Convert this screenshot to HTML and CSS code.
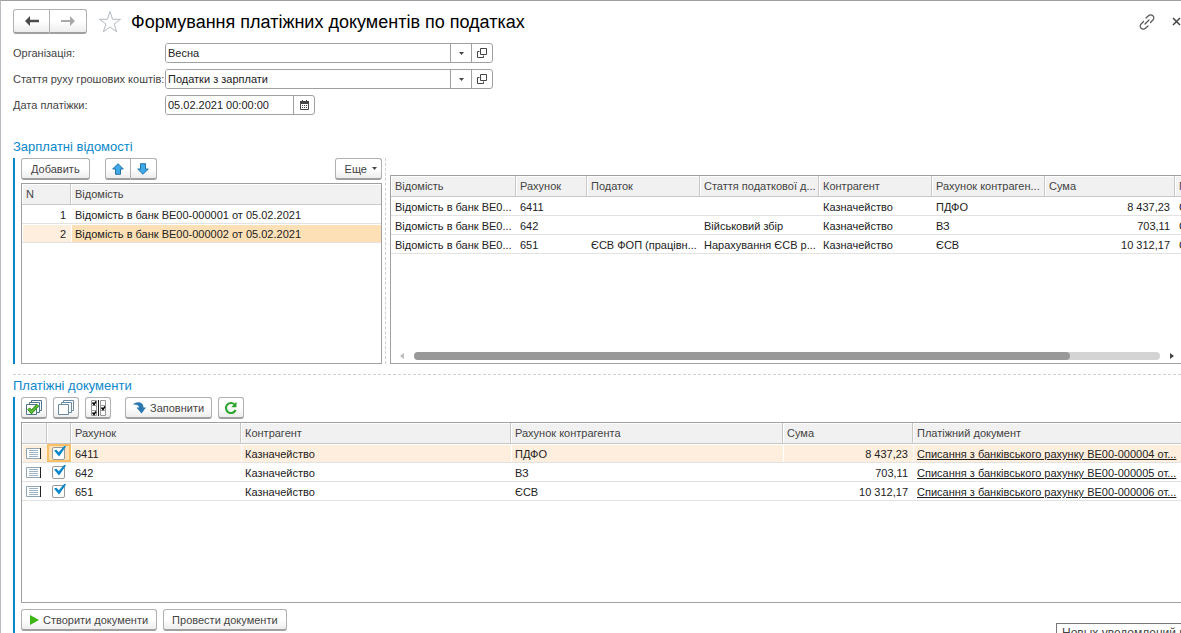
FILE: index.html
```html
<!DOCTYPE html>
<html lang="uk">
<head>
    <meta charset="UTF-8">
    <meta name="viewport" content="width=device-width, initial-scale=1.0">
    <title>Формування платіжних документів по податках</title>
    <link rel="stylesheet" href="styles.css">
</head>
<body>
<div class="window">

    <header class="titlebar">
        <div class="btn-group nav">
            <button class="btn" aria-label="Назад">
                <svg width="16" height="12" viewBox="0 0 16 12"><path d="M1 6l5-5v3.700h9v2.600H6V11z" fill="#4a4a4a"/></svg>
            </button>
            <button class="btn" aria-label="Вперед">
                <svg width="16" height="12" viewBox="0 0 16 12"><path d="M15 6l-5-5v3.900H1v2.200h9V11z" fill="#a8a8a8"/></svg>
            </button>
        </div>
        <button class="plain" aria-label="Додати в обране">
            <svg width="24" height="24" viewBox="0 0 24 24"><path d="M12 1.500l2.600 7.800h7.900l-6.400 4.700 2.500 7.800L12 17l-6.600 4.800L7.900 14 1.500 9.300h7.900z" fill="none" stroke="#b3b9c0" stroke-width="1"/></svg>
        </button>
        <h1>Формування платіжних документів по податках</h1>
        <div class="tools">
            <button class="plain" aria-label="Посилання">
                <svg width="18" height="18" viewBox="0 0 18 18" fill="none" stroke="#555" stroke-width="1.200" stroke-linecap="round"><path d="M8 5l2.500-2.200a2.900 2.900 0 0 1 4.400 0 2.900 2.900 0 0 1 0 4.200L12.500 9.500M10 13l-2.500 2.200a2.900 2.900 0 0 1-4.400 0 2.900 2.900 0 0 1 0-4.200L5.500 8.500M7 11l4-4"/></svg>
            </button>
            <button class="plain" aria-label="Закрити">
                <svg width="9" height="9" viewBox="0 0 9 9"><path d="M1 1l7 7M8 1L1 8" stroke="#444" stroke-width="1.500"/></svg>
            </button>
        </div>
    </header>

    <form class="fields">
        <label for="org">Організація:</label>
        <div class="field">
            <input id="org" type="text" value="Весна">
            <button type="button" aria-label="Вибрати"><svg width="5" height="3" viewBox="0 0 5 3"><path d="M0 0h5L2.500 3z" fill="#444"/></svg></button>
            <button type="button" aria-label="Відкрити"><svg width="10" height="10" viewBox="0 0 10 10" fill="none" stroke="#444"><path d="M3.500.5h6v6h-6zM2.500 3.500h-2v6h6v-2"/></svg></button>
        </div>

        <label for="article">Стаття руху грошових коштів:</label>
        <div class="field">
            <input id="article" type="text" value="Податки з зарплати">
            <button type="button" aria-label="Вибрати"><svg width="5" height="3" viewBox="0 0 5 3"><path d="M0 0h5L2.500 3z" fill="#444"/></svg></button>
            <button type="button" aria-label="Відкрити"><svg width="10" height="10" viewBox="0 0 10 10" fill="none" stroke="#444"><path d="M3.500.5h6v6h-6zM2.500 3.500h-2v6h6v-2"/></svg></button>
        </div>

        <label for="date">Дата платіжки:</label>
        <div class="field field-date">
            <input id="date" type="text" value="05.02.2021 00:00:00">
            <button type="button" aria-label="Календар"><svg width="9" height="10" viewBox="0 0 9 10"><path d="M.5 2v7.500h8V2" fill="none" stroke="#444"/><path d="M0 1h9v3H0zM2 0h1v1H2zM6 0h1v1H6z" fill="#444"/><path d="M2 5.500h5M2 7.500h5" stroke="#444" stroke-dasharray="1 1"/></svg></button>
        </div>
    </form>

    <h2>Зарплатні відомості</h2>
    <div class="split">
        <section class="group statements">
            <div class="toolbar">
                <button class="btn">Добавить</button>
                <div class="btn-group move">
                    <button class="btn" aria-label="Вгору"><svg width="12" height="12" viewBox="0 0 12 12"><path d="M6 .7l5.300 5.300H8.500v5.300h-5V6H.7z" fill="#3fa9e8" stroke="#2373a8"/></svg></button>
                    <button class="btn" aria-label="Вниз"><svg width="12" height="12" viewBox="0 0 12 12"><path d="M6 11.300L.7 6h2.800V.7h5V6h2.800z" fill="#3fa9e8" stroke="#2373a8"/></svg></button>
                </div>
                <button class="btn more">Еще <svg width="5" height="3" viewBox="0 0 5 3"><path d="M0 0h5L2.500 3z" fill="#444"/></svg></button>
            </div>
            <div class="grid">
                <table>
                    <colgroup><col class="w-n"><col></colgroup>
                    <thead>
                        <tr><th>N</th><th>Відомість</th></tr>
                    </thead>
                    <tbody>
                        <tr><td class="num">1</td><td>Відомість в банк ВЕ00-000001 от 05.02.2021</td></tr>
                        <tr class="selected"><td class="num">2</td><td class="current">Відомість в банк ВЕ00-000002 от 05.02.2021</td></tr>
                    </tbody>
                </table>
            </div>
        </section>

        <div class="splitter"></div>

        <section class="grid taxes">
            <table>
                <colgroup>
                    <col class="w-statement"><col class="w-account"><col class="w-text"><col class="w-article"><col class="w-text"><col class="w-text"><col class="w-sum"><col class="w-text">
                </colgroup>
                <thead>
                    <tr><th>Відомість</th><th>Рахунок</th><th>Податок</th><th>Стаття податкової д...</th><th>Контрагент</th><th>Рахунок контраген...</th><th>Сума</th><th>Призначення</th></tr>
                </thead>
                <tbody>
                    <tr><td>Відомість в банк ВЕ0...</td><td>6411</td><td></td><td></td><td>Казначейство</td><td>ПДФО</td><td class="num">8 437,23</td><td>Сплата</td></tr>
                    <tr><td>Відомість в банк ВЕ0...</td><td>642</td><td></td><td>Військовий збір</td><td>Казначейство</td><td>ВЗ</td><td class="num">703,11</td><td>Сплата</td></tr>
                    <tr><td>Відомість в банк ВЕ0...</td><td>651</td><td>ЄСВ ФОП (працівн...</td><td>Нарахування ЄСВ р...</td><td>Казначейство</td><td>ЄСВ</td><td class="num">10 312,17</td><td>Сплата</td></tr>
                </tbody>
            </table>
            <div class="scrollbar">
                <svg width="4" height="6" viewBox="0 0 4 6"><path d="M4 0v6L0 3z" fill="#bbb"/></svg>
                <div class="track"><div class="thumb"></div></div>
                <svg width="4" height="6" viewBox="0 0 4 6"><path d="M0 0v6l4-3z" fill="#444"/></svg>
            </div>
        </section>
    </div>

    <div class="divider"></div>

    <h2>Платіжні документи</h2>
    <section class="group payments">
        <div class="toolbar">
            <button class="btn icon" aria-label="Позначити всі">
                <svg width="16" height="16" viewBox="0 0 16 16"><g fill="#fff" stroke="#4f7690"><path d="M5.500.5h10v10h-10z"/><path d="M3.500 2.500h10v10h-10z"/><path d="M.5 4.500h10v10H.5z"/></g><path d="M2.500 8.500L5.500 12l6.500-7" fill="none" stroke="#2f8a1c" stroke-width="3.400"/><path d="M2.500 8.500L5.500 12l6.500-7" fill="none" stroke="#62c23a" stroke-width="1.600"/></svg>
            </button>
            <button class="btn icon" aria-label="Зняти позначки">
                <svg width="16" height="16" viewBox="0 0 16 16"><g fill="#fff" stroke="#6b8ba3"><path d="M5.500.5h10v10h-10z"/><path d="M3.500 2.500h10v10h-10z"/><path d="M.5 4.500h10v10H.5z"/></g></svg>
            </button>
            <button class="btn icon" aria-label="Інвертувати позначки">
                <svg width="15" height="16" viewBox="0 0 15 16"><g fill="#fff" stroke="#999"><path d="M.5.5h5v5h-5zM.5 5.500h5v5h-5zM.5 10.500h5v5h-5zM9.500.5h5v5h-5zM9.500 5.500h5v5h-5zM9.500 10.500h5v5h-5z"/></g><path d="M7.500 0v16" stroke="#222"/><path d="M1.500 2.500l1.500 2 2-3M1.500 12.500l1.500 2 2-3M10.500 7.500l1.500 2 2-3" fill="none" stroke="#000" stroke-width="1.500"/></svg>
            </button>
            <button class="btn fill">
                <svg width="13" height="12" viewBox="0 0 13 12"><path d="M0 2.500C2-.6 10.500-1.400 10.500 5.500H13l-4.500 6L3.500 5.500H6C6 3.200 3.500 2.200 0 2.500z" fill="#2b78b0"/></svg>
                Заповнити
            </button>
            <button class="btn icon" aria-label="Оновити">
                <svg width="14" height="14" viewBox="0 0 14 14"><path d="M11.600 9A5 5 0 1 1 10.500 3.400" fill="none" stroke="#2ba52b" stroke-width="2"/><path d="M12.500.8v5.400H7.200z" fill="#2ba52b"/></svg>
            </button>
        </div>
        <div class="grid">
            <table>
                <colgroup><col class="w-icon"><col class="w-check"><col class="w-acc"><col class="w-party"><col class="w-party-acc"><col class="w-sum"><col></colgroup>
                <thead>
                    <tr><th></th><th></th><th>Рахунок</th><th>Контрагент</th><th>Рахунок контрагента</th><th>Сума</th><th>Платіжний документ</th></tr>
                </thead>
                <tbody>
                    <tr class="selected">
                        <td class="mark"><svg width="15" height="11" viewBox="0 0 15 11"><path d="M.5.5h14v10H.5z" fill="#fff" stroke="#8fa5b5"/><path d="M3 2.500h9M3 4.500h9M3 6.500h9M3 8.500h9" stroke="#9db4c6"/><path d="M14.500 0v11" stroke="#222"/></svg></td>
                        <td class="mark current-check"><input type="checkbox" checked aria-label="6411"></td>
                        <td>6411</td><td>Казначейство</td><td>ПДФО</td><td class="num">8 437,23</td>
                        <td><a href="#">Списання з банківського рахунку ВЕ00-000004 от...</a></td>
                    </tr>
                    <tr>
                        <td class="mark"><svg width="15" height="11" viewBox="0 0 15 11"><path d="M.5.5h14v10H.5z" fill="#fff" stroke="#8fa5b5"/><path d="M3 2.500h9M3 4.500h9M3 6.500h9M3 8.500h9" stroke="#9db4c6"/><path d="M14.500 0v11" stroke="#222"/></svg></td>
                        <td class="mark"><input type="checkbox" checked aria-label="642"></td>
                        <td>642</td><td>Казначейство</td><td>ВЗ</td><td class="num">703,11</td>
                        <td><a href="#">Списання з банківського рахунку ВЕ00-000005 от...</a></td>
                    </tr>
                    <tr>
                        <td class="mark"><svg width="15" height="11" viewBox="0 0 15 11"><path d="M.5.5h14v10H.5z" fill="#fff" stroke="#8fa5b5"/><path d="M3 2.500h9M3 4.500h9M3 6.500h9M3 8.500h9" stroke="#9db4c6"/><path d="M14.500 0v11" stroke="#222"/></svg></td>
                        <td class="mark"><input type="checkbox" checked aria-label="651"></td>
                        <td>651</td><td>Казначейство</td><td>ЄСВ</td><td class="num">10 312,17</td>
                        <td><a href="#">Списання з банківського рахунку ВЕ00-000006 от...</a></td>
                    </tr>
                </tbody>
            </table>
        </div>
        <div class="actions">
            <button class="btn"><svg width="9" height="10" viewBox="0 0 9 10"><path d="M0 0l9 5-9 5z" fill="#3db514"/></svg>Створити документи</button>
            <button class="btn">Провести документи</button>
        </div>
    </section>

    <div class="notice">Новых уведомлений нет</div>
</div>
</body>
</html>
```
FILE: styles.css
```css
* {
    box-sizing: border-box;
}
body {
    margin: 0;
    font-family: "Liberation Sans", Arial, sans-serif;
    font-size: 11px;
    line-height: 14px;
    color: #222;
    background-color: #fff;
}
button, input {
    font: inherit;
    color: inherit;
}
svg {
    display: block;
    flex: none;
}
.window {
    position: relative;
    display: flex;
    flex-direction: column;
    height: 100vh;
    padding: 8px 0 0 12px;
    border-top: 1px solid #a0a0a0;
    border-left: 1px solid #b9bbc0;
    overflow: hidden;
}

/* Title */
.titlebar {
    display: flex;
    align-items: center;
    height: 25px;
}
h1 {
    flex: 1;
    margin: 0 0 0 9px;
    font-size: 18px;
    line-height: 24px;
    font-weight: normal;
    color: #000;
    white-space: nowrap;
}
h2 {
    margin: 0 0 4px;
    font-size: 13px;
    line-height: 15px;
    font-weight: normal;
    color: #0a87cc;
}
.tools {
    display: flex;
    align-items: center;
    gap: 16px;
}
.plain {
    padding: 0;
    border: none;
    background: none;
}
.nav {
    margin-right: 11px;
}
.nav .btn {
    width: 37px;
    height: 25px;
}

/* Buttons */
.btn {
    display: flex;
    align-items: center;
    justify-content: center;
    height: 22px;
    padding: 0 9px;
    border: 1px solid #b0b0b0;
    border-bottom: 2px solid #a0a0a0;
    border-radius: 3px;
    background: linear-gradient(#fff 50%, #ededed);
    color: #444;
    white-space: nowrap;
}
.btn-group {
    display: flex;
}
.btn-group .btn {
    padding: 0;
}
.btn-group .btn:first-child {
    border-radius: 3px 0 0 3px;
}
.btn-group .btn:last-child {
    border-left: none;
    border-radius: 0 3px 3px 0;
}
.move {
    margin-left: 15px;
}
.move .btn {
    width: 26px;
}
.btn.more {
    gap: 5px;
    margin-left: auto;
    padding: 0 4px 0 9px;
}
.btn.icon {
    width: 26px;
    padding: 0;
}
.btn.fill {
    gap: 4px;
    margin-left: 8px;
    padding: 0 7px;
}

/* Fields */
.fields {
    display: grid;
    grid-template-columns: 152px 1fr;
    row-gap: 6px;
    align-items: center;
    margin: 9px 0 24px;
    color: #444;
}
.fields label {
    white-space: nowrap;
}
.field {
    display: flex;
    width: 328px;
    height: 20px;
    border: 1px solid #a0a0a0;
    border-radius: 3px;
    overflow: hidden;
}
.field-date {
    width: 150px;
}
.field input {
    flex: 1;
    min-width: 0;
    padding: 0 2px;
    border: none;
    color: #222;
}
.field button {
    display: flex;
    align-items: center;
    justify-content: center;
    width: 21px;
    padding: 0;
    border: none;
    border-left: 1px solid #a0a0a0;
    background: none;
}

/* Groups */
.split {
    display: flex;
    flex: none;
    height: 206px;
}
.group {
    display: flex;
    flex-direction: column;
    padding-left: 6px;
    border-left: 2px solid #0a87cc;
}
.statements {
    width: 369px;
}
.toolbar, .actions {
    display: flex;
}
.toolbar {
    margin-bottom: 3px;
}
.payments .toolbar {
    gap: 6px;
}
.splitter {
    margin: 0 4px 0 3px;
    border-left: 1px dashed #d0d0d0;
}
.divider {
    margin: 10px 0 3px;
    border-top: 1px dashed #d0d0d0;
}
.payments {
    flex: 1;
    min-height: 0;
}
.actions {
    gap: 6px;
    padding: 6px 0 2px;
}
.actions .btn {
    gap: 4px;
    padding: 0 8px;
}

/* Tables */
.grid {
    flex: 1;
    min-width: 0;
    min-height: 0;
    border: 1px solid #a0a0a0;
    overflow: hidden;
}
table {
    width: 100%;
    table-layout: fixed;
    border-collapse: separate;
    border-spacing: 0;
}
th, td {
    height: 19px;
    padding: 2px 0 0 4px;
    border-bottom: 1px solid #e2e2e2;
    text-align: left;
    font-weight: normal;
    line-height: 14px;
    white-space: nowrap;
    overflow: hidden;
    text-overflow: ellipsis;
}
th {
    height: 21px;
    padding-top: 0;
    border-right: 1px solid #c8c8c8;
    border-bottom-color: #c8c8c8;
    background-color: #f1f1f1;
    box-shadow: inset 1px 1px #fff;
    color: #444;
}
th:last-child {
    border-right: none;
}
.num {
    padding-right: 5px;
    text-align: right;
}
.selected td {
    background-color: #feeedd;
    box-shadow: inset 1px 1px #fff;
}
.selected .current {
    background-color: #fde0b6;
}
.payments .grid, .taxes {
    border-right: none;
}
.w-n { width: 49px; }
.w-statement { width: 125px; }
.w-account { width: 71px; }
.w-text { width: 113px; }
.w-article { width: 119px; }
.w-sum { width: 130px; }
.w-icon { width: 25px; }
.w-check { width: 24px; }
.w-acc { width: 170px; }
.w-party { width: 270px; }
.w-party-acc { width: 272px; }

.taxes {
    display: flex;
    flex-direction: column;
    margin-top: 17px;
}
.taxes table {
    width: 897px;
}
.scrollbar {
    display: flex;
    align-items: center;
    margin-top: auto;
    padding: 3px 7px 3px 9px;
}
.track {
    flex: 1;
    height: 8px;
    margin: 0 10px;
    border-radius: 4px;
    background-color: #d4d4d4;
}
.thumb {
    width: 88%;
    height: 8px;
    border-radius: 4px;
    background-color: #999;
}
.mark {
    padding: 0 4px;
}
.mark input {
    appearance: none;
    position: relative;
    display: block;
    width: 13px;
    height: 13px;
    margin: 0 0 0 1px;
    border: 1px solid #999;
    border-radius: 2px;
    background-color: #fff;
}
.mark input:checked::before {
    content: "";
    position: absolute;
    left: 1px;
    top: -2px;
    width: 12px;
    height: 11px;
    background-color: #0a87cc;
    clip-path: polygon(0 45%, 20% 38%, 40% 62%, 88% 0, 100% 8%, 42% 100%);
}
.selected .current-check {
    background-color: #fde0b6;
    box-shadow: inset 0 0 0 2px #fbbf66;
}
a {
    color: #222;
}

.notice {
    position: absolute;
    left: calc(100% - 125px);
    bottom: -10px;
    padding: 2px 5px;
    border: 1px solid #777;
    background-color: #fff;
    color: #444;
    font-size: 12px;
    white-space: nowrap;
}
```
